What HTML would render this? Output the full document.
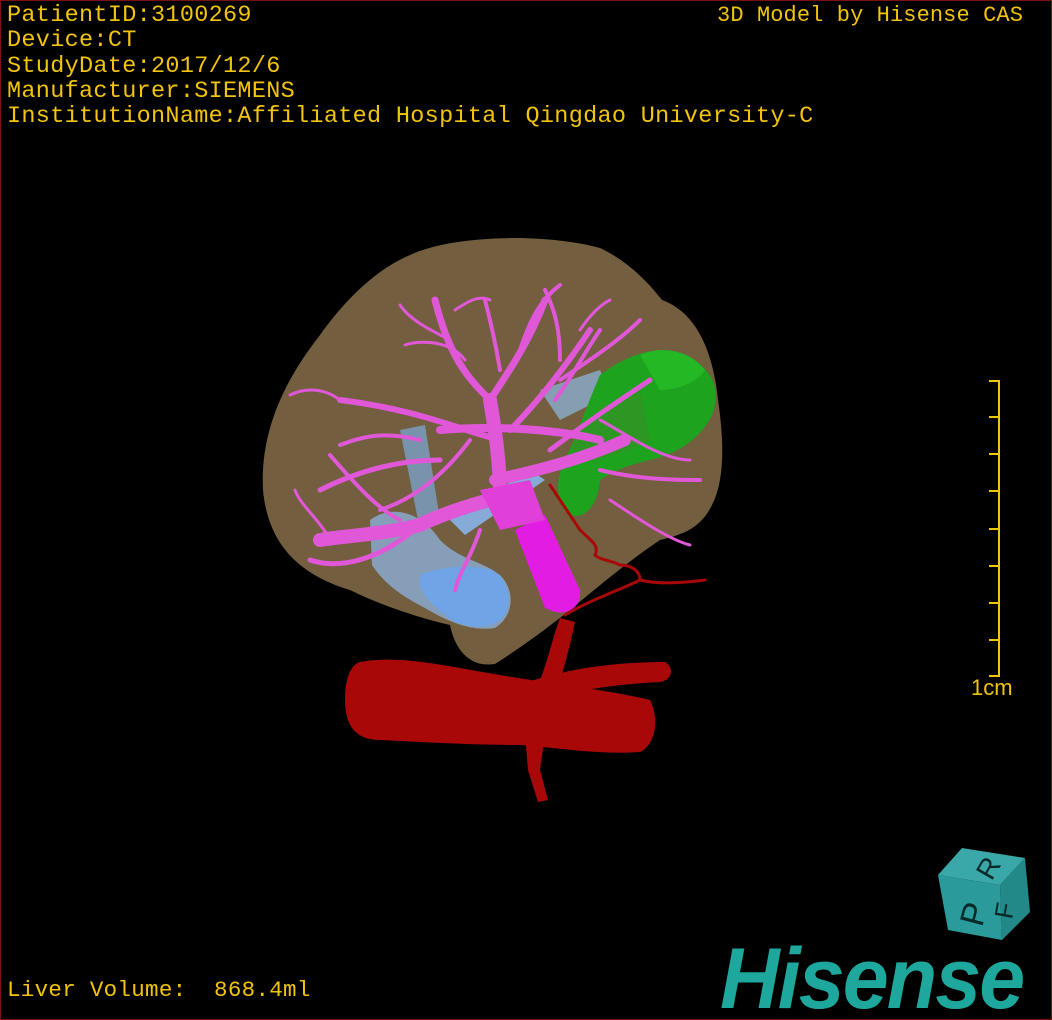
<!DOCTYPE html>
<html><head><meta charset="utf-8"><style>
html,body{margin:0;padding:0;background:#000;}
#c{position:relative;width:1050px;height:1018px;border:1px solid #7a1010;background:#000;overflow:hidden;}
.t{position:absolute;color:#f2c40c;font-family:"Liberation Mono",monospace;white-space:pre;}
#info{left:6px;top:2px;font-size:23.5px;line-height:25.3px;letter-spacing:0.3px;}
#cas{right:28px;top:2px;font-size:22px;line-height:25px;letter-spacing:0.1px;}
#vol{left:6px;top:976px;font-size:22.5px;letter-spacing:0.3px;}
#cm{left:970px;top:674px;font-size:22px;font-family:"Liberation Sans",sans-serif;}
#logo{position:absolute;left:719px;top:928px;font-family:"Liberation Sans",sans-serif;font-weight:bold;font-style:italic;font-size:86px;color:#1ea79c;letter-spacing:-2px;transform:scaleX(0.96);transform-origin:left;line-height:100px;}
svg{position:absolute;left:0;top:0;}
</style></head><body><div id="c">
<svg width="1050" height="1018" viewBox="1 1 1050 1018">
<path d="M410,255 C450,236 540,232 600,248 C630,262 650,285 662,300 C690,310 712,340 718,400 C724,440 725,480 712,505 C700,530 680,535 660,540 C630,560 600,585 570,610 C545,630 520,648 495,664 C470,668 455,650 450,625 C420,618 380,605 350,590 C300,575 268,545 263,490 C260,430 285,380 320,335 C345,300 375,270 410,255 Z" fill="#735e3f"/>
<g stroke="none">
<path d="M370,520 C390,505 420,510 440,540 C460,560 480,560 500,575 C515,590 515,615 495,628 C470,632 445,620 425,608 C405,598 385,585 372,565 Z" fill="#8aa9cc" opacity="0.85"/>
<path d="M420,575 C445,565 470,565 492,570 C508,578 512,600 505,615 C495,628 475,630 455,622 C440,612 425,600 420,585 Z" fill="#6fa4e6"/>
<path d="M400,430 L425,425 L440,520 L420,530 Z" fill="#7aa0c8" opacity="0.8"/>
<path d="M540,390 L600,370 L610,395 L560,420 Z" fill="#8aaed0" opacity="0.8"/>
<path d="M450,520 L530,470 L545,480 L465,535 Z" fill="#86abd8"/>
</g>
<path d="M600,375 C630,352 665,342 690,360 C712,368 722,390 712,415 C700,440 675,455 650,460 C630,465 615,470 600,480 C598,505 585,520 570,515 C555,505 555,480 565,460 C575,440 585,410 600,375 Z" fill="#1da31d"/>
<path d="M640,355 C660,345 690,350 705,370 C700,380 680,390 660,390 Z" fill="#24b824"/>
<path d="M575,430 C595,410 620,395 640,390 L650,440 C620,455 595,460 570,465 Z" fill="#3a8f2a" opacity="0.6"/>
<g stroke="#e058d8" fill="none" stroke-linecap="round">
<path d="M490,500 C470,505 440,515 420,525 C380,535 350,535 320,540" stroke-width="14"/>
<path d="M500,500 C500,460 495,430 490,400" stroke-width="14"/>
<path d="M495,480 C540,470 580,460 625,440" stroke-width="12"/>
<path d="M440,430 C500,425 560,430 600,440" stroke-width="8"/>
<path d="M490,400 C470,380 450,360 435,300" stroke-width="7"/>
<path d="M490,400 C510,370 530,340 545,300" stroke-width="7"/>
<path d="M510,430 C540,400 570,360 590,330" stroke-width="6"/>
<path d="M500,440 C460,430 420,410 340,400" stroke-width="6"/>
<path d="M420,440 C380,430 360,438 340,445" stroke-width="4"/>
<path d="M440,460 C400,460 360,470 320,490" stroke-width="5"/>
<path d="M420,525 C380,560 340,570 310,560" stroke-width="5"/>
<path d="M330,455 C360,490 380,510 400,520" stroke-width="4"/>
<path d="M470,440 C440,480 410,500 380,510" stroke-width="4"/>
<path d="M550,450 C590,420 620,400 650,380" stroke-width="5"/>
<path d="M600,470 C640,480 680,480 700,480" stroke-width="4"/>
<path d="M610,500 C640,520 670,540 690,545" stroke-width="3"/>
<path d="M560,380 C590,360 620,340 640,320" stroke-width="4"/>
<path d="M520,350 C530,320 540,300 560,285" stroke-width="4"/>
<path d="M500,370 C495,340 490,320 485,300" stroke-width="4"/>
<path d="M560,360 C560,330 555,310 545,290" stroke-width="4"/>
<path d="M600,330 C580,360 570,380 555,400" stroke-width="4"/>
<path d="M450,340 C430,330 410,320 400,305" stroke-width="3"/>
<path d="M465,360 C450,340 420,340 405,345" stroke-width="3"/>
<path d="M330,540 C320,520 300,505 295,490" stroke-width="3"/>
<path d="M340,400 C320,385 300,390 290,395" stroke-width="3"/>
<path d="M455,310 C470,300 480,295 490,300" stroke-width="3"/>
<path d="M580,330 C590,315 600,305 610,300" stroke-width="3"/>
<path d="M480,530 C470,560 460,570 455,590" stroke-width="4"/>
<path d="M600,420 C620,430 660,460 690,460" stroke-width="3"/>
<path d="M540,520 C550,540 560,560 565,580" stroke-width="3"/>
</g>
<path d="M515,530 L545,515 L580,590 C582,605 570,615 555,612 L545,608 Z" fill="#e31ce3"/>
<path d="M480,490 L530,480 L545,520 L500,530 Z" fill="#e040d8"/>
<g fill="#a80808">
<path d="M360,662 C400,655 440,665 500,675 C560,685 610,690 650,700 C660,720 655,745 640,752 C600,755 560,748 520,745 C470,745 420,742 380,740 C355,740 345,725 345,700 C345,680 350,665 360,662 Z"/>
<path d="M520,685 C560,670 610,662 665,662 C675,668 672,680 660,682 C620,684 580,690 540,698 Z"/>
<path d="M525,735 L545,735 L540,770 L548,800 L538,802 L528,770 Z"/>
<path d="M540,680 C548,660 552,640 560,618 L575,622 C570,645 565,665 560,680 Z"/>
</g>
<g stroke="#a80808" fill="none" stroke-linecap="round">
<path d="M565,615 C590,600 620,590 640,580 C660,585 690,582 705,580" stroke-width="3"/>
<path d="M640,580 C640,570 630,565 620,565 C610,560 600,560 595,555 C600,545 590,540 580,530 C570,515 560,500 550,485" stroke-width="3"/>
</g>
<g stroke="#f2c40c" stroke-width="2">
<line x1="999" y1="380" x2="999" y2="677"/>
<line x1="989" y1="381" x2="999" y2="381"/><line x1="989" y1="417" x2="999" y2="417"/><line x1="989" y1="454" x2="999" y2="454"/><line x1="989" y1="491" x2="999" y2="491"/><line x1="989" y1="529" x2="999" y2="529"/><line x1="989" y1="566" x2="999" y2="566"/><line x1="989" y1="603" x2="999" y2="603"/><line x1="989" y1="640" x2="999" y2="640"/><line x1="989" y1="676" x2="999" y2="676"/>
</g>
<path d="M938,875 L962,848 L1025,858 L1000,885 Z" fill="#3aa8a8"/>
<path d="M938,875 L1000,885 L1002,940 L948,930 Z" fill="#2a9a9a"/>
<path d="M1000,885 L1025,858 L1030,912 L1002,940 Z" fill="#228888"/>
<text x="982" y="928" font-family="Liberation Sans" font-size="34" fill="#062a2a" transform="rotate(-75 982 928)">P</text>
<text x="978" y="878" font-family="Liberation Sans" font-size="28" fill="#062a2a" transform="rotate(-60 988 868)">R</text>
<text x="1012" y="920" font-family="Liberation Sans" font-size="26" fill="#062a2a" transform="rotate(-80 1012 920)">F</text>
</svg>
<div class="t" id="info">PatientID:3100269
Device:CT
StudyDate:2017/12/6
Manufacturer:SIEMENS
InstitutionName:Affiliated Hospital Qingdao University-C</div>
<div class="t" id="cas">3D Model by Hisense CAS</div>
<div class="t" id="vol">Liver Volume:  868.4ml</div>
<div class="t" id="cm">1cm</div>
<div id="logo">Hisense</div>
</div></body></html>
